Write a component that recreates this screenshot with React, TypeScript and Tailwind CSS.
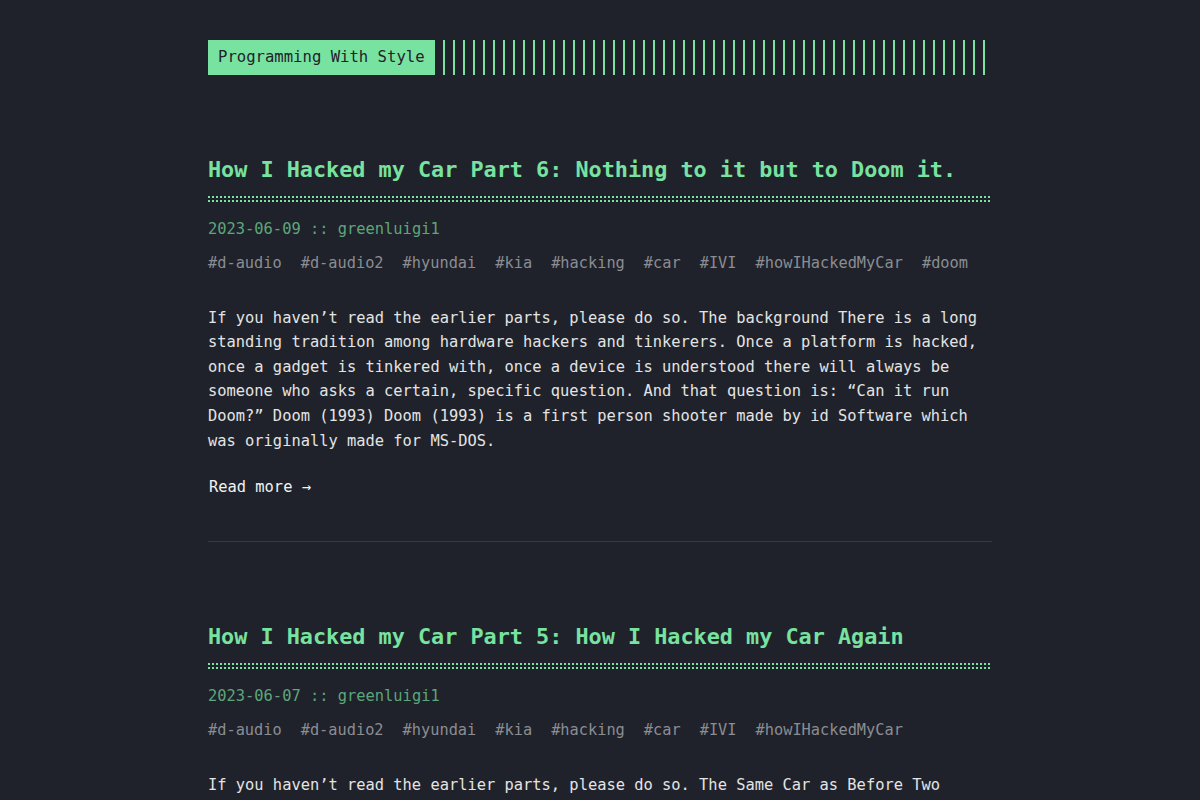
const posts = [
  {
    title: "How I Hacked my Car Part 6: Nothing to it but to Doom it.",
    date: "2023-06-09",
    author: "greenluigi1",
    tags: ["d-audio", "d-audio2", "hyundai", "kia", "hacking", "car", "IVI", "howIHackedMyCar", "doom"],
    excerpt:
      "If you haven’t read the earlier parts, please do so. The background There is a long standing tradition among hardware hackers and tinkerers. Once a platform is hacked, once a gadget is tinkered with, once a device is understood there will always be someone who asks a certain, specific question. And that question is: “Can it run Doom?” Doom (1993) Doom (1993) is a first person shooter made by id Software which was originally made for MS-DOS.",
  },
  {
    title: "How I Hacked my Car Part 5: How I Hacked my Car Again",
    date: "2023-06-07",
    author: "greenluigi1",
    tags: ["d-audio", "d-audio2", "hyundai", "kia", "hacking", "car", "IVI", "howIHackedMyCar"],
    excerpt:
      "If you haven’t read the earlier parts, please do so. The Same Car as Before Two years after I got my car I was given a chance to look at the newer firmware, so I went back to see what had changed since the last time I poked at it.",
  },
];

function DottedRule() {
  return (
    <div className="mt-[11px] flex flex-col gap-[2px]">
      <div className="h-[2px] w-full bg-[repeating-linear-gradient(90deg,#78e2a0_0_2px,transparent_2px_4px)]" />
      <div className="h-[2px] w-full bg-[repeating-linear-gradient(90deg,#78e2a0_0_2px,transparent_2px_4px)]" />
    </div>
  );
}

function Post({ post, last }: { post: (typeof posts)[number]; last?: boolean }) {
  return (
    <article className="mt-[80px]">
      <h1 className="text-[21.8px] font-bold leading-[30px] text-[#78e2a0]">{post.title}</h1>
      <DottedRule />
      <div className="mt-[15px] text-[15.4px] leading-[24px] text-[#5da67b]">
        {post.date} :: {post.author}
      </div>
      <div className="mt-[10px] flex flex-wrap gap-x-[19px] text-[15.3px] leading-[24px] text-[#8b8d93]">
        {post.tags.map((t) => (
          <span key={t}>#{t}</span>
        ))}
      </div>
      <p className="mt-[30.7px] text-[15.4px] leading-[24.6px] text-[#e4e4e4]">{post.excerpt}</p>
      {!last && (
        <>
          <a href="#" className="mt-[21.7px] block pl-px text-[15.4px] leading-[24px] text-[#f2f2f2]">
            Read more →
          </a>
          <div className="mt-[42px] h-px bg-[#363941]" />
        </>
      )}
    </article>
  );
}

export default function App() {
  return (
    <div className="min-h-screen bg-[#1f222a] font-['DejaVu_Sans_Mono','Liberation_Mono',monospace]">
      <div className="mx-auto w-[784px] pt-[40px] pb-10">
        <header className="flex h-[35px] items-stretch">
          <div className="bg-[#78e2a0] px-[10px] text-[15.6px] leading-[35px] text-[#1f222a]">
            Programming With Style
          </div>
          <div className="ml-[8px] flex-1 bg-[repeating-linear-gradient(90deg,#78e2a0_0_2px,transparent_2px_10px)]" />
        </header>
        {posts.map((p, i) => (
          <Post key={p.title} post={p} last={i === posts.length - 1} />
        ))}
      </div>
    </div>
  );
}
